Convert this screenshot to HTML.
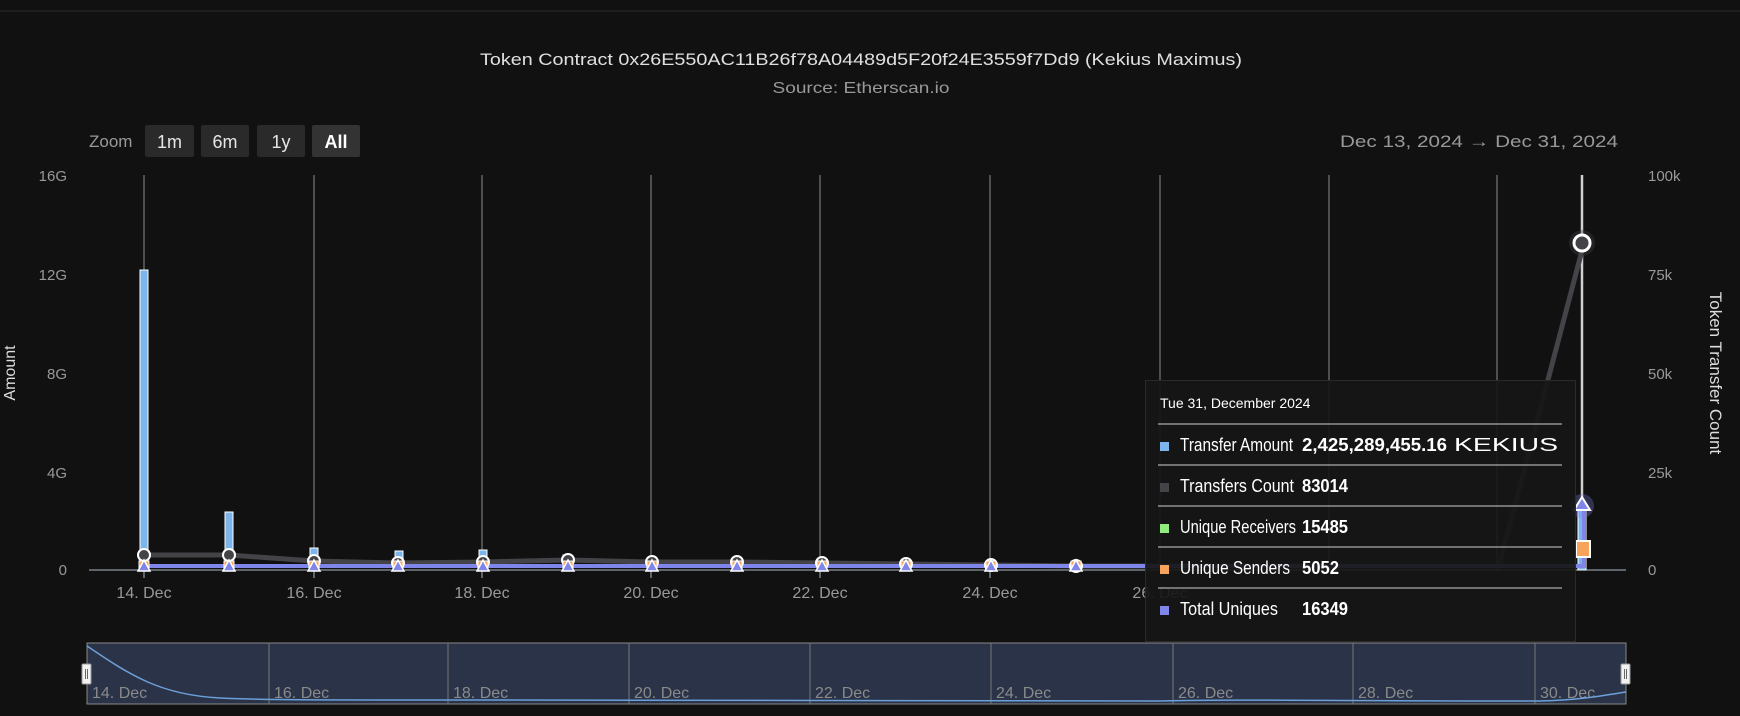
<!DOCTYPE html>
<html><head><meta charset="utf-8"><style>
html,body{margin:0;padding:0;background:#111111;}
svg{display:block;font-family:"Liberation Sans",sans-serif;}
</style></head><body>
<svg width="1740" height="716" viewBox="0 0 1740 716" xmlns="http://www.w3.org/2000/svg">
<rect width="1740" height="716" fill="#111111"/>
<line x1="0" y1="11" x2="1740" y2="11" stroke="#2a2a2a" stroke-width="1"/>
<text x="861" y="65" text-anchor="middle" fill="#e0e0e0" font-size="17" textLength="762" lengthAdjust="spacingAndGlyphs">Token Contract 0x26E550AC11B26f78A04489d5F20f24E3559f7Dd9 (Kekius Maximus)</text>
<text x="861" y="93" text-anchor="middle" fill="#999" font-size="16" textLength="177" lengthAdjust="spacingAndGlyphs">Source: Etherscan.io</text>
<text x="89" y="147" fill="#999" font-size="17">Zoom</text>
<g font-size="18" fill="#e6e6e6" text-anchor="middle">
<rect x="145" y="125" width="49" height="32" rx="2" fill="#2a2a2a"/><text x="169.5" y="148">1m</text>
<rect x="201" y="125" width="48" height="32" rx="2" fill="#2a2a2a"/><text x="225" y="148">6m</text>
<rect x="257" y="125" width="48" height="32" rx="2" fill="#2a2a2a"/><text x="281" y="148">1y</text>
<rect x="312" y="125" width="48" height="32" rx="2" fill="#333"/><text x="336" y="148" font-weight="bold" fill="#fff">All</text>
</g>
<text x="1618" y="147" text-anchor="end" fill="#999" font-size="17" textLength="278" lengthAdjust="spacingAndGlyphs">Dec 13, 2024  →  Dec 31, 2024</text>
<g fill="#999" font-size="15" text-anchor="end">
<text x="67" y="181">16G</text><text x="67" y="280">12G</text><text x="67" y="379">8G</text><text x="67" y="478">4G</text><text x="67" y="575">0</text>
</g>
<g fill="#999" font-size="15">
<text x="1648" y="181">100k</text><text x="1648" y="280">75k</text><text x="1648" y="379">50k</text><text x="1648" y="478">25k</text><text x="1648" y="575">0</text>
</g>
<text transform="translate(15,373) rotate(-90)" text-anchor="middle" fill="#ddd" font-size="16">Amount</text>
<text transform="translate(1710,373) rotate(90)" text-anchor="middle" fill="#ddd" font-size="17">Token Transfer Count</text>
<g stroke="#8a8a8a" stroke-width="1">
<line x1="144" y1="175" x2="144" y2="570"/><line x1="314" y1="175" x2="314" y2="570"/><line x1="482" y1="175" x2="482" y2="570"/><line x1="651" y1="175" x2="651" y2="570"/><line x1="820" y1="175" x2="820" y2="570"/><line x1="990" y1="175" x2="990" y2="570"/><line x1="1160" y1="175" x2="1160" y2="570"/><line x1="1329" y1="175" x2="1329" y2="570"/><line x1="1497" y1="175" x2="1497" y2="570"/>
</g>
<line x1="1582" y1="175" x2="1582" y2="570" stroke="#cfcfcf" stroke-width="2.5"/>
<line x1="89" y1="570" x2="1626" y2="570" stroke="#aab6c8" stroke-width="1"/>
<g stroke="#aab6c8"><line x1="144" y1="570" x2="144" y2="578"/><line x1="314" y1="570" x2="314" y2="578"/><line x1="482" y1="570" x2="482" y2="578"/><line x1="651" y1="570" x2="651" y2="578"/><line x1="820" y1="570" x2="820" y2="578"/><line x1="990" y1="570" x2="990" y2="578"/></g>
<g fill="#999" font-size="16" text-anchor="middle">
<text x="144" y="598">14. Dec</text><text x="314" y="598">16. Dec</text><text x="482" y="598">18. Dec</text><text x="651" y="598">20. Dec</text><text x="820" y="598">22. Dec</text><text x="990" y="598">24. Dec</text><text x="1160" y="598">26. Dec</text>
</g>
<g fill="#7cb5ec" stroke="#fff" stroke-width="1">
<rect x="140" y="270" width="8" height="300"/><rect x="225" y="512" width="8" height="58"/><rect x="310" y="548" width="8" height="22"/><rect x="395" y="551" width="8" height="19"/><rect x="479" y="550" width="8" height="20"/><rect x="563" y="555" width="8" height="15"/>
<rect x="648" y="563" width="8" height="7"/><rect x="733" y="563" width="8" height="7"/><rect x="817" y="564" width="8" height="6"/><rect x="902" y="564" width="8" height="6"/><rect x="987" y="565" width="8" height="5"/><rect x="1072" y="565" width="8" height="5"/>
<rect x="1578" y="510" width="8" height="60"/>
</g>
<polyline fill="none" stroke="#434348" stroke-width="5" points="144,555 229,555 314,561 398,563 483,562 568,560 652,562 737,562 822,563 906,564 991,565 1076,566 1160,566 1245,566 1330,566 1414,566 1499,566 1584,243"/>
<polyline fill="none" stroke="#f7a35c" stroke-width="2" points="144,567 1584,567"/>
<polyline fill="none" stroke="#8085e9" stroke-width="4" points="144,566 1584,566 1584,505"/>
<g fill="#434348" stroke="#fff" stroke-width="2">
<circle cx="144" cy="555" r="6"/><circle cx="229" cy="555" r="6"/><circle cx="314" cy="561" r="6"/><circle cx="398" cy="563" r="6"/><circle cx="483" cy="562" r="6"/><circle cx="568" cy="560" r="6"/><circle cx="652" cy="562" r="6"/><circle cx="737" cy="562" r="6"/><circle cx="822" cy="563" r="6"/><circle cx="906" cy="564" r="6"/><circle cx="991" cy="565" r="6"/><circle cx="1076" cy="566" r="6"/>
</g>
<g fill="#f7a35c" stroke="#fff" stroke-width="1">
<rect x="139" y="561" width="10" height="10"/><rect x="224" y="561" width="10" height="10"/><rect x="309" y="561" width="10" height="10"/><rect x="393" y="561" width="10" height="10"/><rect x="478" y="561" width="10" height="10"/><rect x="563" y="561" width="10" height="10"/><rect x="647" y="561" width="10" height="10"/><rect x="732" y="561" width="10" height="10"/><rect x="817" y="561" width="10" height="10"/><rect x="901" y="561" width="10" height="10"/><rect x="986" y="561" width="10" height="10"/><rect x="1071" y="561" width="10" height="10"/>
</g>
<g fill="#8085e9" stroke="#fff" stroke-width="1.5">
<path d="M144,560 l6,11 h-12z"/><path d="M229,560 l6,11 h-12z"/><path d="M314,560 l6,11 h-12z"/><path d="M398,560 l6,11 h-12z"/><path d="M483,560 l6,11 h-12z"/><path d="M568,560 l6,11 h-12z"/><path d="M652,560 l6,11 h-12z"/><path d="M737,560 l6,11 h-12z"/><path d="M822,560 l6,11 h-12z"/><path d="M906,560 l6,11 h-12z"/><path d="M991,560 l6,11 h-12z"/><path d="M1076,560 l6,11 h-12z"/>
</g>
<circle cx="1582" cy="243" r="13" fill="#434348" opacity="0.35"/>
<circle cx="1582" cy="243" r="8" fill="#434348" stroke="#fff" stroke-width="3"/>
<circle cx="1582" cy="506" r="12" fill="#8085e9" opacity="0.3"/>
<path d="M1582,497 l8,13 h-16z" fill="#8085e9" stroke="#fff" stroke-width="2"/>
<rect x="1576" y="541" width="14" height="16" fill="#f7a35c" stroke="#fff" stroke-width="2"/>
<rect x="1145.5" y="380.5" width="430" height="261" fill="#161616" fill-opacity="0.92" stroke="#2a2a2a"/>
<text x="1160" y="408" fill="#fff" font-size="14">Tue 31, December 2024</text>
<g stroke="#d0d0d0" stroke-width="1"><line x1="1158" y1="424" x2="1562" y2="424"/><line x1="1158" y1="465" x2="1562" y2="465"/><line x1="1158" y1="506" x2="1562" y2="506"/><line x1="1158" y1="547" x2="1562" y2="547"/><line x1="1158" y1="588" x2="1562" y2="588"/></g>
<g font-size="18" fill="#fff">
<rect x="1160" y="442" width="9" height="9" fill="#7cb5ec"/><text x="1180" y="451" textLength="113" lengthAdjust="spacingAndGlyphs">Transfer Amount</text><text x="1302" y="451" font-weight="bold" textLength="145" lengthAdjust="spacingAndGlyphs">2,425,289,455.16</text><text x="1454" y="451" textLength="104" lengthAdjust="spacingAndGlyphs">KEKIUS</text>
<rect x="1160" y="483" width="9" height="9" fill="#434348"/><text x="1180" y="492" textLength="114" lengthAdjust="spacingAndGlyphs">Transfers Count</text><text x="1302" y="492" font-weight="bold" textLength="46" lengthAdjust="spacingAndGlyphs">83014</text>
<rect x="1160" y="524" width="9" height="9" fill="#90ed7d"/><text x="1180" y="533" textLength="116" lengthAdjust="spacingAndGlyphs">Unique Receivers</text><text x="1302" y="533" font-weight="bold" textLength="46" lengthAdjust="spacingAndGlyphs">15485</text>
<rect x="1160" y="565" width="9" height="9" fill="#f7a35c"/><text x="1180" y="574" textLength="110" lengthAdjust="spacingAndGlyphs">Unique Senders</text><text x="1302" y="574" font-weight="bold" textLength="37" lengthAdjust="spacingAndGlyphs">5052</text>
<rect x="1160" y="606" width="9" height="9" fill="#8085e9"/><text x="1180" y="615" textLength="98" lengthAdjust="spacingAndGlyphs">Total Uniques</text><text x="1302" y="615" font-weight="bold" textLength="46" lengthAdjust="spacingAndGlyphs">16349</text>
</g>
<rect x="87" y="643" width="1539" height="61" fill="#2a3347" stroke="#888" stroke-width="1"/>
<g stroke="#777"><line x1="269" y1="643" x2="269" y2="704"/><line x1="448" y1="643" x2="448" y2="704"/><line x1="629" y1="643" x2="629" y2="704"/><line x1="810" y1="643" x2="810" y2="704"/><line x1="991" y1="643" x2="991" y2="704"/><line x1="1173" y1="643" x2="1173" y2="704"/><line x1="1353" y1="643" x2="1353" y2="704"/><line x1="1535" y1="643" x2="1535" y2="704"/></g>
<g fill="#8a8a8a" font-size="16"><text x="92" y="698">14. Dec</text><text x="274" y="698">16. Dec</text><text x="453" y="698">18. Dec</text><text x="634" y="698">20. Dec</text><text x="815" y="698">22. Dec</text><text x="996" y="698">24. Dec</text><text x="1178" y="698">26. Dec</text><text x="1358" y="698">28. Dec</text><text x="1540" y="698">30. Dec</text></g>
<path d="M87,646 C130,675 160,695 220,698 C260,700 300,700 500,700 L1160,701 C1250,699 1300,701 1540,701 C1580,700 1600,696 1626,692" fill="none" stroke="#6d9fd8" stroke-width="1.5"/>
<g fill="#f2f2f2" stroke="#999"><rect x="82" y="664" width="9" height="20" rx="1"/><rect x="1621" y="664" width="9" height="20" rx="1"/></g>
<g stroke="#666"><line x1="85.5" y1="669" x2="85.5" y2="679"/><line x1="87.5" y1="669" x2="87.5" y2="679"/><line x1="1624.5" y1="669" x2="1624.5" y2="679"/><line x1="1626.5" y1="669" x2="1626.5" y2="679"/></g>
</svg>
</body></html>
